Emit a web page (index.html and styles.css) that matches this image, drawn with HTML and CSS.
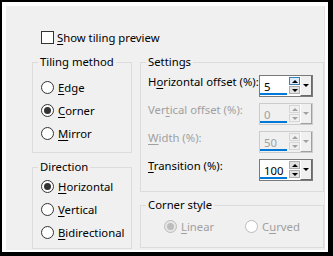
FILE: index.html
```html
<!DOCTYPE html>
<html lang="en">

<head>
    <meta charset="UTF-8" />
    <meta name="viewport" content="width=device-width, initial-scale=1.0" />
    <title>Tiling</title>
    <link rel="stylesheet" href="styles.css">
</head>

<body>
    <div class="frame">
        <div class="window">
            <div class="panel">
                <div class="check-row">
                    <span class="checkbox"></span>
                    <span><u>S</u>how tiling preview</span>
                </div>

                <div class="columns">
                    <div class="col-left">
                        <fieldset class="group tiling">
                            <legend>Tiling method</legend>
                            <div class="radio"><span class="dot"></span><span><u>E</u>dge</span></div>
                            <div class="radio"><span class="dot on"></span><span><u>C</u>orner</span></div>
                            <div class="radio"><span class="dot"></span><span><u>M</u>irror</span></div>
                        </fieldset>

                        <fieldset class="group direction">
                            <legend>Direction</legend>
                            <div class="radio"><span class="dot on"></span><span><u>H</u>orizontal</span></div>
                            <div class="radio"><span class="dot"></span><span><u>V</u>ertical</span></div>
                            <div class="radio"><span class="dot"></span><span><u>B</u>idirectional</span></div>
                        </fieldset>
                    </div>

                    <div class="col-right">
                        <fieldset class="group settings">
                            <legend>Settings</legend>
                            <div class="field-row">
                                <span class="field-label">H<u>o</u>rizontal offset (%):</span>
                                <div class="spin">
                                    <span class="spin-value">5</span>
                                    <span class="spin-arrows">
                                        <span class="arrow up hot"></span>
                                        <span class="arrow down"></span>
                                    </span>
                                    <span class="spin-drop"></span>
                                </div>
                            </div>
                            <div class="field-row off">
                                <span class="field-label">Ver<u>t</u>ical offset (%):</span>
                                <div class="spin">
                                    <span class="spin-value">0</span>
                                    <span class="spin-arrows">
                                        <span class="arrow up"></span>
                                        <span class="arrow down"></span>
                                    </span>
                                    <span class="spin-drop"></span>
                                </div>
                            </div>
                            <div class="field-row off">
                                <span class="field-label"><u>W</u>idth (%):</span>
                                <div class="spin">
                                    <span class="spin-value">50</span>
                                    <span class="spin-arrows">
                                        <span class="arrow up"></span>
                                        <span class="arrow down"></span>
                                    </span>
                                    <span class="spin-drop"></span>
                                </div>
                            </div>
                            <div class="field-row">
                                <span class="field-label"><u>T</u>ransition (%):</span>
                                <div class="spin">
                                    <span class="spin-value">100</span>
                                    <span class="spin-arrows">
                                        <span class="arrow up"></span>
                                        <span class="arrow down"></span>
                                    </span>
                                    <span class="spin-drop"></span>
                                </div>
                            </div>
                        </fieldset>

                        <fieldset class="group corner">
                            <legend>Corner style</legend>
                            <div class="radio-line">
                                <div class="radio off linear"><span class="dot on"></span><span><u>L</u>inear</span></div>
                                <div class="radio off"><span class="dot"></span><span>C<u>u</u>rved</span></div>
                            </div>
                        </fieldset>
                    </div>
                </div>
            </div>
        </div>
    </div>
</body>

</html>
```

FILE: styles.css
```css
body {
    margin: 0;
    font-family: "Noto Sans", "Open Sans", sans-serif;
    font-size: 11.3px;
    color: #000;
}

.frame {
    width: 333px;
    height: 256px;
    box-sizing: border-box;
    border-style: solid;
    border-color: #000;
    border-width: 2px 5px 4px 2px;
}

.window {
    height: 100%;
    box-sizing: border-box;
    background-color: #fff;
    padding: 4px 1px 2px 4px;
}

.panel {
    width: 319px;
    height: 244px;
    box-sizing: border-box;
    background-color: #f0f0f0;
    border-right: 1px solid #e3e3e3;
    padding: 25px 0 0 26px;
}

u {
    text-decoration-thickness: 1px;
    text-underline-offset: 2px;
}

.check-row {
    display: flex;
    align-items: center;
    gap: 3px;
    height: 13px;
    margin-left: 9px;
    white-space: nowrap;
}

.checkbox {
    width: 11px;
    height: 11px;
    border: 1px solid #333;
    background-color: #fff;
}

.columns {
    display: flex;
    gap: 8px;
    margin-top: 10px;
}

.col-left {
    width: 100px;
    display: flex;
    flex-direction: column;
    gap: 6px;
}

.col-right {
    width: 184px;
    display: flex;
    flex-direction: column;
    gap: 5px;
}

.group {
    margin: 0;
    border: 1px solid #dcdcdc;
    padding: 0 0 0 5px;
    min-width: 0;
}

.group legend {
    padding: 0 2px;
    margin: 0;
    line-height: 16px;
}

.radio {
    display: flex;
    align-items: center;
    gap: 4px;
    height: 23px;
    white-space: nowrap;
}

.tiling {
    padding-top: 6px;
    padding-bottom: 7px;
}

.direction {
    padding-top: 0;
    padding-bottom: 4px;
}

.tiling .radio,
.direction .radio {
    margin-left: 3px;
}

.dot {
    width: 11px;
    height: 11px;
    border: 1px solid #333;
    border-radius: 50%;
    background-color: #fff;
    display: flex;
    align-items: center;
    justify-content: center;
}

.dot.on::after {
    content: "";
    width: 7px;
    height: 7px;
    border-radius: 50%;
    background-color: #333;
}

.radio.off {
    color: #a0a0a0;
}

.radio.off .dot {
    border-color: #bcbcbc;
}

.radio.off .dot.on {
    background-color: #e6e6e6;
}

.radio.off .dot.on::after {
    background-color: #bcbcbc;
}

.settings {
    padding-top: 5px;
    padding-right: 10px;
    padding-bottom: 10px;
    display: flex;
    flex-direction: column;
    gap: 6px;
}

.field-row {
    display: flex;
    justify-content: space-between;
    align-items: flex-start;
    margin-left: 2px;
}

.field-label {
    line-height: 14px;
    white-space: nowrap;
}

.field-row.off .field-label {
    color: #a0a0a0;
}

.spin {
    width: 54px;
    height: 22px;
    box-sizing: border-box;
    border: 1px solid #7a7a7a;
    display: flex;
    background-color: #fff;
    flex-shrink: 0;
}

.spin-value {
    flex: 1;
    padding: 3px 0 0 4px;
    border-bottom: 2px solid #0078d7;
    margin-bottom: 1px;
}

.spin-arrows {
    width: 11px;
    margin-left: 2px;
    display: flex;
    flex-direction: column;
    gap: 1px;
    padding-top: 1px;
}

.arrow {
    height: 8px;
    box-sizing: border-box;
    border: 1px solid #adadad;
    background-color: #e1e1e1;
    display: flex;
    align-items: center;
    justify-content: center;
}

.arrow.hot {
    border-color: #3c7fb1;
    background-color: #dcecfc;
}

.arrow.up::after {
    content: "";
    border-left: 3px solid transparent;
    border-right: 3px solid transparent;
    border-bottom: 3px solid #000;
}

.arrow.down::after,
.spin-drop::after {
    content: "";
    border-left: 3px solid transparent;
    border-right: 3px solid transparent;
    border-top: 3px solid #000;
}

.spin-drop {
    width: 12px;
    box-sizing: border-box;
    background-color: #f0f0f0;
    border-left: 1px solid #fff;
    border-right: 1px solid #696969;
    border-bottom: 1px solid #696969;
    display: flex;
    align-items: center;
    justify-content: center;
}

.field-row.off .spin {
    border-color: #cccccc;
    background-color: #f0f0f0;
}

.field-row.off .spin-value {
    color: #a0a0a0;
}

.field-row.off .arrow {
    border-color: #d6d6d6;
    background-color: #f0f0f0;
}

.field-row.off .arrow::after {
    border-top-color: #a0a0a0;
    border-bottom-color: #a0a0a0;
}

.field-row.off .spin-drop {
    border-right-color: #a0a0a0;
    border-bottom-color: #a0a0a0;
}

.field-row.off .spin-drop::after {
    border-top-color: #a0a0a0;
}

.corner {
    padding-top: 2px;
    padding-bottom: 9px;
}

.radio-line {
    display: flex;
    margin-left: 18px;
}

.linear {
    width: 81px;
}
```
